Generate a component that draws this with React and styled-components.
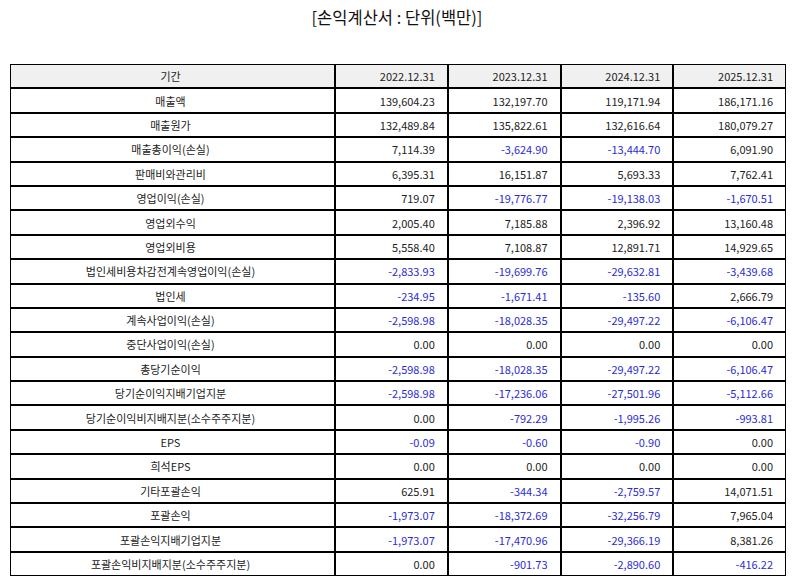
import React from "react";
import styled, { createGlobalStyle } from "styled-components";

const rows = [
  ["매출액", "139,604.23", "132,197.70", "119,171.94", "186,171.16"],
  ["매출원가", "132,489.84", "135,822.61", "132,616.64", "180,079.27"],
  ["매출총이익(손실)", "7,114.39", "-3,624.90", "-13,444.70", "6,091.90"],
  ["판매비와관리비", "6,395.31", "16,151.87", "5,693.33", "7,762.41"],
  ["영업이익(손실)", "719.07", "-19,776.77", "-19,138.03", "-1,670.51"],
  ["영업외수익", "2,005.40", "7,185.88", "2,396.92", "13,160.48"],
  ["영업외비용", "5,558.40", "7,108.87", "12,891.71", "14,929.65"],
  ["법인세비용차감전계속영업이익(손실)", "-2,833.93", "-19,699.76", "-29,632.81", "-3,439.68"],
  ["법인세", "-234.95", "-1,671.41", "-135.60", "2,666.79"],
  ["계속사업이익(손실)", "-2,598.98", "-18,028.35", "-29,497.22", "-6,106.47"],
  ["중단사업이익(손실)", "0.00", "0.00", "0.00", "0.00"],
  ["총당기순이익", "-2,598.98", "-18,028.35", "-29,497.22", "-6,106.47"],
  ["당기순이익지배기업지분", "-2,598.98", "-17,236.06", "-27,501.96", "-5,112.66"],
  ["당기순이익비지배지분(소수주주지분)", "0.00", "-792.29", "-1,995.26", "-993.81"],
  ["EPS", "-0.09", "-0.60", "-0.90", "0.00"],
  ["희석EPS", "0.00", "0.00", "0.00", "0.00"],
  ["기타포괄손익", "625.91", "-344.34", "-2,759.57", "14,071.51"],
  ["포괄손익", "-1,973.07", "-18,372.69", "-32,256.79", "7,965.04"],
  ["포괄손익지배기업지분", "-1,973.07", "-17,470.96", "-29,366.19", "8,381.26"],
  ["포괄손익비지배지분(소수주주지분)", "0.00", "-901.73", "-2,890.60", "-416.22"],
];

const periods = ["2022.12.31", "2023.12.31", "2024.12.31", "2025.12.31"];

const GlobalStyle = createGlobalStyle`
  body {
    margin: 0;
    background: #fff;
    font-family: "Noto Sans CJK KR", "Noto Sans", sans-serif;
    color: #222;
  }
`;

const Page = styled.div`
  width: 794px;
  padding: 6px 0 0 10px;
  box-sizing: border-box;
`;

const Title = styled.h1`
  margin: 0 10px 36px 0;
  font-size: 16.5px;
  font-weight: 400;
  line-height: 22px;
  text-align: center;
  color: #111;
`;

const Table = styled.table`
  width: 776px;
  border-collapse: separate;
  border-spacing: 0;
  table-layout: fixed;
  font-size: 11px;
`;

const Row = styled.tr`
  height: 24.4px;
`;

const Cell = styled.td`
  border: 1px solid #000;
  padding: 0 12px 0 8px;
  font-weight: 400;
  text-align: ${(p) => (p.$label ? "center" : "right")};
  color: ${(p) => (p.$neg ? "#2b2bd6" : "#222")};
  background: ${(p) => (p.$head ? "#f0f0f0" : "#fff")};
  white-space: nowrap;
  line-height: 14px;
`;

const App = () => (
  <Page>
    <GlobalStyle />
    <Title>[손익계산서 : 단위(백만)]</Title>
    <Table>
      <colgroup>
        <col style={{ width: 325 }} />
        <col />
        <col />
        <col />
        <col />
      </colgroup>
      <thead>
        <Row>
          <Cell as="th" $head $label>
            기간
          </Cell>
          {periods.map((p) => (
            <Cell as="th" key={p} $head>
              {p}
            </Cell>
          ))}
        </Row>
      </thead>
      <tbody>
        {rows.map(([label, ...values]) => (
          <Row key={label}>
            <Cell $label>{label}</Cell>
            {values.map((v, i) => (
              <Cell key={i} $neg={v.startsWith("-")}>
                {v}
              </Cell>
            ))}
          </Row>
        ))}
      </tbody>
    </Table>
  </Page>
);

export default App;
